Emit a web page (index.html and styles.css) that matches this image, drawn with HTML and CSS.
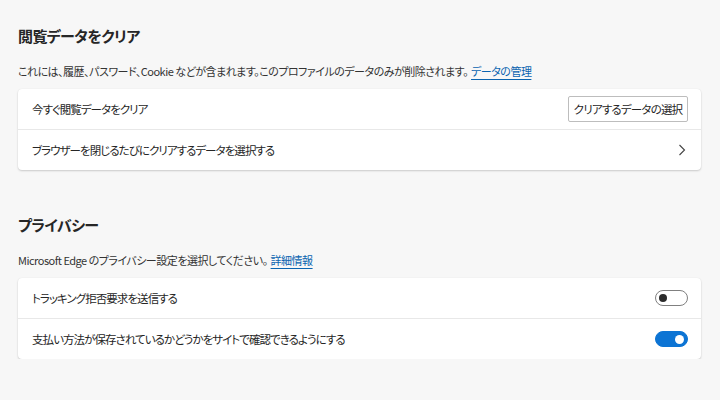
FILE: index.html
```html
<!DOCTYPE html>
<html lang="ja">
<head>
<meta charset="utf-8">
<link rel="stylesheet" href="styles.css">
</head>
<body>
<div class="page">
  <section class="section">
    <h2 class="title">閲覧データをクリア</h2>
    <p class="desc">これには、履歴、パスワード、Cookie などが含まれます。このプロファイルのデータのみが削除されます。<a class="link" href="#">データの管理</a></p>
    <div class="card">
      <div class="row">
        <span class="label">今すぐ閲覧データをクリア</span>
        <button class="btn">クリアするデータの選択</button>
      </div>
      <div class="row">
        <span class="label">ブラウザーを閉じるたびにクリアするデータを選択する</span>
        <svg class="chev" width="16" height="16" viewBox="0 0 16 16"><path d="M5.5 3 L10.5 8 L5.5 13" fill="none" stroke="#444" stroke-width="1.1"/></svg>
      </div>
    </div>
  </section>
  <section class="section second">
    <h2 class="title">プライバシー</h2>
    <p class="desc">Microsoft Edge のプライバシー設定を選択してください。<a class="link" href="#">詳細情報</a></p>
    <div class="card">
      <div class="row">
        <span class="label">トラッキング拒否要求を送信する</span>
        <span class="toggle"><span class="knob"></span></span>
      </div>
      <div class="row">
        <span class="label">支払い方法が保存されているかどうかをサイトで確認できるようにする</span>
        <span class="toggle on"><span class="knob"></span></span>
      </div>
    </div>
  </section>
</div>
</body>
</html>
```
FILE: styles.css
```css
html, body {
  margin: 0;
  padding: 0;
  background: #f7f7f7;
}
body {
  font-family: "Noto Sans CJK JP", "Noto Sans", sans-serif;
  font-feature-settings: "palt";
  color: #1f1f1f;
}
.page {
  padding: 24px 19px 0 18px;
}
.section.second {
  margin-top: 43px;
}
.title {
  margin: 0;
  font-size: 15px;
  line-height: 24px;
  font-weight: 600;
  letter-spacing: -0.6px;
  color: #262626;
}
.desc {
  margin: 14px 0 9px;
  font-size: 11px;
  line-height: 18px;
  letter-spacing: -0.5px;
  color: #333;
}
.link {
  color: #0a64b0;
  text-decoration: underline;
  text-underline-offset: 3px;
  margin-left: 3px;
}
.card {
  background: #fff;
  border-radius: 4px;
  box-shadow: 0 1px 2px rgba(0,0,0,0.18), 0 0 1px rgba(0,0,0,0.08);
}
.row {
  display: flex;
  align-items: center;
  justify-content: space-between;
  height: 40px;
  padding: 0 13px 0 14px;
}
.row + .row {
  border-top: 1px solid #e8e8e8;
}
.label {
  font-size: 11.5px;
  letter-spacing: -0.95px;
  color: #262626;
}
.btn {
  font-family: inherit;
  font-feature-settings: "palt";
  font-size: 11.5px;
  letter-spacing: -0.8px;
  color: #262626;
  background: #fff;
  border: 1px solid #bdbdbd;
  border-radius: 2px;
  height: 26px;
  width: 120px;
  padding: 0;
}
.chev {
  margin-right: -2px;
}
.toggle {
  box-sizing: border-box;
  width: 33px;
  height: 16px;
  border: 1px solid #808080;
  border-radius: 8px;
  background: #fff;
  display: flex;
  align-items: center;
  padding: 0 3px;
}
.knob {
  width: 8px;
  height: 8px;
  border-radius: 50%;
  background: #2b2b2b;
}
.toggle.on {
  background: #0c74d4;
  border-color: #0c74d4;
  justify-content: flex-end;
}
.toggle.on .knob {
  background: #fff;
  width: 9px;
  height: 9px;
}
```
